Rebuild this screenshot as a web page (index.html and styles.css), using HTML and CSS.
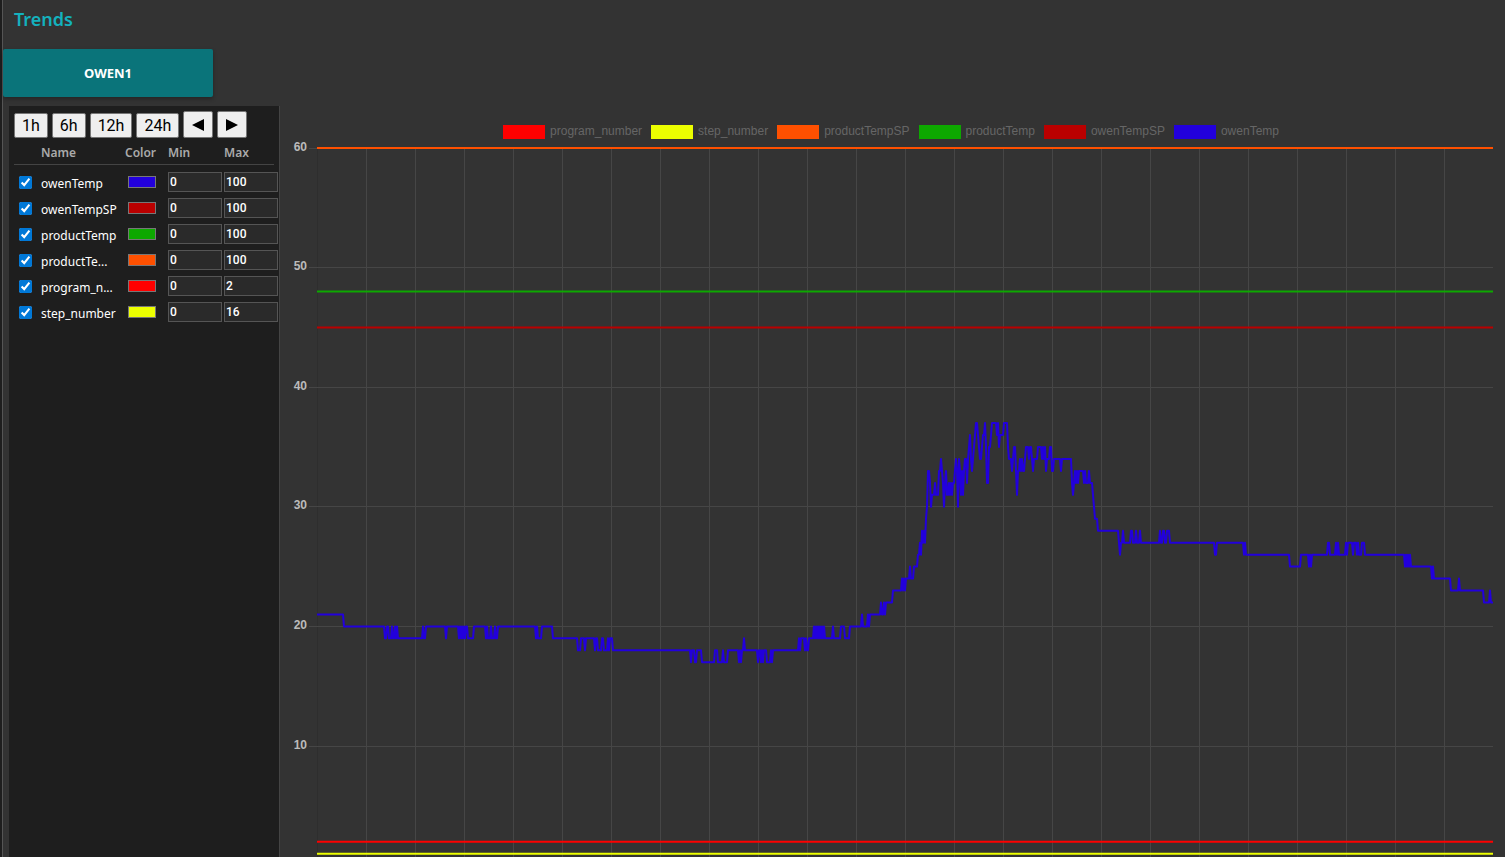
FILE: index.html
```html
<!DOCTYPE html>
<html lang="en">
<head>
<meta charset="utf-8">
<title>Trends</title>
<link rel="stylesheet" href="styles.css">
</head>
<body>
<div class="page">
  <h1 class="title">Trends</h1>
  <nav><button class="tab" type="button">OWEN1</button></nav>
  <main class="workspace">
    <aside class="sidebar">
      <div class="ranges">
        <button type="button">1h</button>
        <button type="button">6h</button>
        <button type="button">12h</button>
        <button type="button">24h</button>
        <button type="button" class="step" aria-label="Back"><svg width="12" height="14" viewBox="0 0 12 14"><path d="M12 1V13L0 7Z"/></svg></button>
        <button type="button" class="step" aria-label="Forward"><svg width="12" height="14" viewBox="0 0 12 14"><path d="M0 1V13L12 7Z"/></svg></button>
      </div>
      <table class="pens">
        <thead><tr><th></th><th>Name</th><th>Color</th><th>Min</th><th>Max</th></tr></thead>
        <tbody>
          <tr><td><input type="checkbox" id="p1" checked></td><td><label for="p1">owenTemp</label></td><td><span class="swatch blue"></span></td><td><input type="text" aria-label="owenTemp min" value="0"></td><td><input type="text" aria-label="owenTemp max" value="100"></td></tr>
          <tr><td><input type="checkbox" id="p2" checked></td><td><label for="p2">owenTempSP</label></td><td><span class="swatch crimson"></span></td><td><input type="text" aria-label="owenTempSP min" value="0"></td><td><input type="text" aria-label="owenTempSP max" value="100"></td></tr>
          <tr><td><input type="checkbox" id="p3" checked></td><td><label for="p3">productTemp</label></td><td><span class="swatch green"></span></td><td><input type="text" aria-label="productTemp min" value="0"></td><td><input type="text" aria-label="productTemp max" value="100"></td></tr>
          <tr><td><input type="checkbox" id="p4" checked></td><td><label for="p4">productTe...</label></td><td><span class="swatch orange"></span></td><td><input type="text" aria-label="productTempSP min" value="0"></td><td><input type="text" aria-label="productTempSP max" value="100"></td></tr>
          <tr><td><input type="checkbox" id="p5" checked></td><td><label for="p5">program_n...</label></td><td><span class="swatch red"></span></td><td><input type="text" aria-label="program_number min" value="0"></td><td><input type="text" aria-label="program_number max" value="2"></td></tr>
          <tr><td><input type="checkbox" id="p6" checked></td><td><label for="p6">step_number</label></td><td><span class="swatch yellow"></span></td><td><input type="text" aria-label="step_number min" value="0"></td><td><input type="text" aria-label="step_number max" value="16"></td></tr>
        </tbody>
      </table>
    </aside>
    <section class="chart">
      <ul class="legend">
        <li><span class="key red"></span>program_number</li>
        <li><span class="key yellow"></span>step_number</li>
        <li><span class="key orange"></span>productTempSP</li>
        <li><span class="key green"></span>productTemp</li>
        <li><span class="key crimson"></span>owenTempSP</li>
        <li><span class="key blue"></span>owenTemp</li>
      </ul>
      <svg class="plot" viewBox="0 0 1225 740" role="img" aria-label="Trend chart">
        <g id="plot" transform="translate(37 8)"></g>
      </svg>
    </section>
  </main>
</div>
<script src="chart.js"></script>
</body>
</html>
```
FILE: styles.css
```css
* { box-sizing: border-box; }
body {
  margin: 0;
  height: 100vh;
  overflow: hidden;
  background: #1e1e1e;
  color: #fff;
  font-family: "Noto Sans", "Open Sans", sans-serif;
}
.page {
  display: flex;
  flex-direction: column;
  height: 100%;
  margin-left: 2px;
  border-left: 1px solid #555;
  background: #333;
}
.title {
  margin: 0;
  padding: 7px 11px 18px;
  color: #14b1bd;
  font-size: 18px;
  line-height: 24px;
  font-weight: 600;
}
.tab {
  display: block;
  width: 210px;
  height: 48px;
  border: 0;
  border-radius: 2px;
  background: #0a747a;
  box-shadow: 0 2px 4px rgba(0, 0, 0, .3);
  color: #fff;
  font: 700 13px "Noto Sans", "Open Sans", sans-serif;
}
.workspace {
  display: flex;
  flex: 1;
  min-height: 0;
  margin: 9px 0 0 6px;
}
.sidebar {
  flex: 0 0 271px;
  min-width: 0;
  padding: 5px 5px 0;
  border-right: 1px solid #444;
  background: #1e1e1e;
}
.ranges {
  display: flex;
  align-items: flex-end;
  gap: 4px;
  height: 27px;
}
.ranges button {
  height: 25px;
  padding: 0 7px;
  border: 1px solid #767676;
  border-radius: 2px;
  background: #efefef;
  color: #000;
  font: 16px/23px Roboto, sans-serif;
}
.ranges .step {
  display: flex;
  align-items: center;
  justify-content: center;
  width: 30px;
  height: 27px;
}
.pens { display: block; }
.pens thead, .pens tbody { display: block; }
.pens tr {
  display: grid;
  grid-template-columns: 27px 84px 43px 56px minmax(0, 1fr);
  height: 26px;
}
.pens thead tr {
  height: 27px;
  margin-bottom: 5px;
  border-bottom: 1px solid #444;
}
.pens th {
  padding: 5px 0 0;
  color: #aaa;
  font-size: 12px;
  line-height: 20px;
  font-weight: 600;
  text-align: left;
}
.pens td { padding: 2px 0 0; }
.pens td:first-child { padding: 6px 5px 0; }
.pens label {
  display: block;
  padding-top: 2px;
  font-size: 12px;
  line-height: 20px;
}
.pens input[type="checkbox"] {
  display: block;
  width: 13px;
  height: 13px;
  margin: 0;
  accent-color: #0078d7;
}
.pens input[type="text"] {
  display: block;
  width: 54px;
  height: 20px;
  padding: 0 1px;
  border: 1px solid #555;
  background: #2a2a2a;
  color: #fff;
  font: 500 12px Roboto, sans-serif;
}
.swatch {
  display: block;
  width: 28px;
  height: 12px;
  margin: 4px 0 0 3px;
  border: 1px solid #777;
}
.red { background: #f00; }
.yellow { background: #ecff00; }
.orange { background: #ff5000; }
.green { background: #0da800; }
.crimson { background: #ba0000; }
.blue { background: #2200dc; }
.chart {
  flex: 1;
  min-width: 0;
  overflow: hidden;
}
.legend {
  display: flex;
  justify-content: center;
  gap: 9px;
  height: 34px;
  margin: 0;
  padding: 18px 12px 0 9px;
  list-style: none;
  color: #666;
  font: 12px/14px "Liberation Sans", Arial, sans-serif;
}
.legend li { display: flex; gap: 5px; }
.key { width: 42px; height: 14px; margin-top: 1px; }
.plot { display: block; width: 100%; }
.plot text {
  fill: #bbb;
  font: bold 12px "Liberation Sans", Arial, sans-serif;
  text-anchor: end;
}
.grid { stroke: #464646; shape-rendering: crispEdges; }
.axis { stroke: #2e2e2e; shape-rendering: crispEdges; }
.series { fill: none; stroke-width: 2; stroke-linejoin: round; }
```
FILE: chart.js
```js
const WIDTH = 1176;
const MAX = 60;
const UNIT = 11.96;

// Each entry is "position:value"; the value holds until the next position.
const owenTemp = `0:21 26:20 67:19 69:20 71:19 74:20 75:19 77:20 78:19 79:20 80:19 105:20 106:19 108:20 128:19 129:20
141:19 142:20 143:19 144:20 145:19 146:20 147:19 148:20 150:19 156:20 168:19 169:20 170:19 173:20 174:19 177:20 178:19 180:20
218:19 219:20 220:19 224:20 235:19 260:18 263:19 267:18 268:19 277:18 278:19 280:18 284:19 286:18 290:19 291:18 292:19 295:18
373:17 374:18 377:17 379:18 384:17 397:18 400:17 405:18 406:17 410:18 421:17 422:18 423:17 424:18 426:19 427:18
440:17 441:18 443:17 444:18 445:17 446:18 449:17 453:18 454:17 455:18 481:19 482:18 483:19 487:18 488:19 489:18 491:19
496:20 497:19 498:20 499:19 500:20 501:19 502:20 503:19 504:20 505:19 506:20 507:19 515:20 516:19 523:20 527:19 532:20
544:21 545:20 550:21 551:20 552:21 563:22 564:21 566:22 567:21 568:22 575:23 584:24 585:23 586:24 587:23 588:24
592:25 593:24 596:25 600:26 602:27 603:26 604:28 605:27 606:28 607:27 608:29 609:30 610:33 612:32 613:30 614:31 617:32 618:31
621:33 623:34 624:33 625:32 626:30 627:32 628:33 629:31 631:32 632:31 633:32 634:31 635:32 637:33 638:34 639:33 640:30 641:34
642:33 643:31 644:33 645:31 646:33 647:34 649:32 650:34 651:35 652:36 653:34 654:33 655:34 656:35 657:36 658:37 660:36 661:35
662:34 664:35 665:36 667:37 668:35 669:32 671:35 673:36 674:37 679:36 680:37 681:35 682:36 686:37 690:35 691:34 694:33 695:34
696:35 698:33 699:31 700:33 702:34 703:33 704:34 705:33 707:34 708:35 711:34 712:35 714:34 715:33 716:34 720:35 724:34 725:35
726:34 727:35 728:33 729:34 732:35 734:33 736:34 743:33 744:34 754:32 755:31 756:32 757:33 758:32 759:33 760:32 761:33
766:32 767:33 768:32 771:33 772:32 775:31 776:30 777:29 780:28 801:27 802:26 803:27 805:28 806:27 813:28 815:27 818:28 819:27
822:28 823:27 842:28 843:27 845:28 847:27 849:28 852:27 897:26 899:27 926:26 927:27 928:26 972:25 983:26 991:25 992:26 993:25
994:26 1010:27 1012:26 1018:27 1019:26 1020:27 1021:26 1028:27 1029:26 1030:27 1035:26 1036:27 1039:26 1040:27 1041:26
1044:27 1047:26 1087:25 1088:26 1089:25 1090:26 1091:25 1092:26 1093:25 1114:24 1115:25 1116:24 1133:23 1141:24 1142:23
1166:22 1172:23 1173:22`;

const plot = document.getElementById("plot");
const y = value => (MAX - value) * UNIT;

function draw(name, attributes, text) {
  const node = document.createElementNS("http://www.w3.org/2000/svg", name);
  for (const key in attributes) node.setAttribute(key, attributes[key]);
  if (text) node.textContent = text;
  plot.append(node);
}

for (let x = 49; x < WIDTH; x += 49) draw("path", { class: "grid", d: `M${x + 0.5} 0V${y(0)}` });
draw("path", { class: "axis", d: `M0.5 0V${y(0)}` });
for (let value = MAX; value > 0; value -= 10) {
  draw("path", { class: "grid", d: `M-8 ${Math.floor(y(value)) + 0.5}H${WIDTH}` });
  draw("text", { x: -10, y: Math.floor(y(value)) + 3 }, String(value));
}

const steps = owenTemp.split(/\s+/).map(entry => entry.split(":").map(Number));
const path = steps.map(([x, value], i) => i ? `H${x}L${x + 1} ${y(value)}` : `M${x} ${y(value)}`).join("");
draw("path", { class: "series", stroke: "#2200dc", d: `${path}H${WIDTH}` });

const levels = [[45, "#ba0000"], [48, "#0da800"], [60, "#ff5000"], [1, "#ecff00"], [2, "#ff0000"]];
for (const [value, stroke] of levels) {
  draw("path", { class: "series", stroke, d: `M0 ${y(value)}H${WIDTH}` });
}
```
